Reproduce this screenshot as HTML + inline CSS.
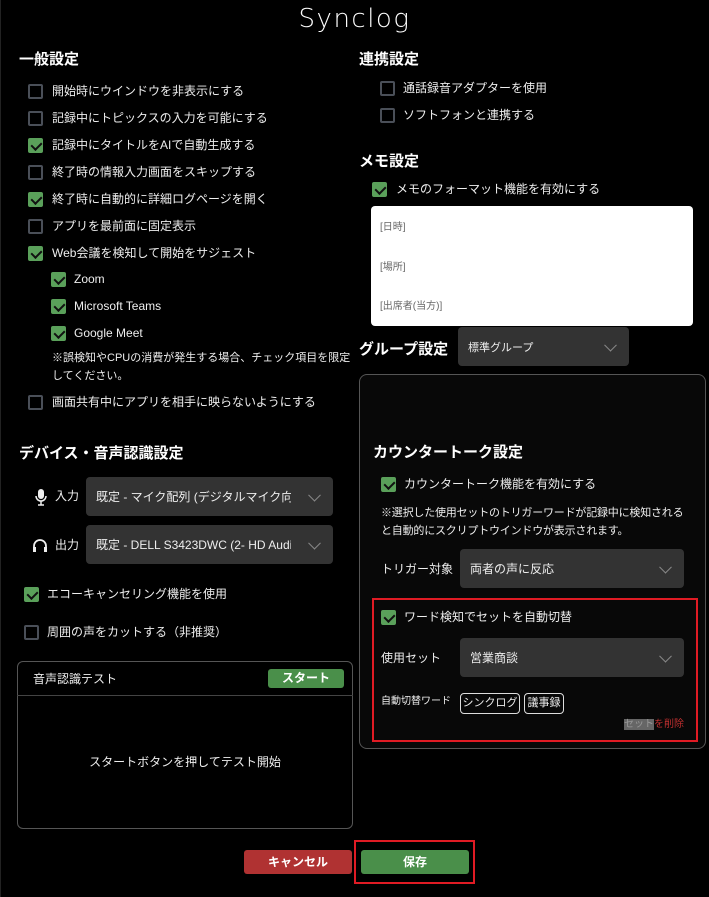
<!DOCTYPE html>
<html><head><meta charset="utf-8"><style>
*{margin:0;padding:0;box-sizing:border-box}
body{width:709px;height:897px;background:#000;color:#eee;font-family:"Liberation Sans","Noto Sans CJK JP",sans-serif;position:relative;overflow:hidden;font-size:12px}
.a{position:absolute;white-space:nowrap}
.h{font-weight:bold;font-size:15px;color:#fff}
.cb{position:absolute;width:15px;height:15px;border:2px solid #4a4f58;border-radius:2px}
.cb.on{background:#5aa05a;border-color:#5aa05a}
.cb.on::after{content:"";position:absolute;left:3px;top:0px;width:5px;height:8px;border:solid #111;border-width:0 2px 2px 0;transform:rotate(45deg)}
.t{position:absolute;font-size:12px;line-height:14px;color:#eee;white-space:nowrap}
.sel{position:absolute;background:#333;border-radius:4px;font-size:12px;color:#eee;padding-left:10px;display:flex;align-items:center;white-space:nowrap}
.sel span{overflow:hidden;display:block}
.sel::after{content:"";position:absolute;right:14px;top:50%;width:8px;height:8px;border:solid #888;border-width:0 1.5px 1.5px 0;transform:translateY(-70%) rotate(45deg)}
</style></head><body>
<div style="position:absolute;left:0;top:0;width:1px;height:897px;background:#222"></div>
<div class="a" style="left:0;width:709px;text-align:center;top:4px;font-size:26px;color:#fff;letter-spacing:1.5px;font-family:'DejaVu Sans',sans-serif;font-weight:300">Synclog</div>

<div class="a h" style="left:19px;top:48px">一般設定</div>
<div class="cb" style="left:28px;top:84px"></div><div class="t" style="left:52px;top:84px">開始時にウインドウを非表示にする</div>
<div class="cb" style="left:28px;top:111px"></div><div class="t" style="left:52px;top:111px">記録中にトピックスの入力を可能にする</div>
<div class="cb on" style="left:28px;top:138px"></div><div class="t" style="left:52px;top:138px">記録中にタイトルをAIで自動生成する</div>
<div class="cb" style="left:28px;top:165px"></div><div class="t" style="left:52px;top:165px">終了時の情報入力画面をスキップする</div>
<div class="cb on" style="left:28px;top:192px"></div><div class="t" style="left:52px;top:192px">終了時に自動的に詳細ログページを開く</div>
<div class="cb" style="left:28px;top:219px"></div><div class="t" style="left:52px;top:219px">アプリを最前面に固定表示</div>
<div class="cb on" style="left:28px;top:246px"></div><div class="t" style="left:52px;top:246px">Web会議を検知して開始をサジェスト</div>
<div class="cb on" style="left:51px;top:272px"></div><div class="t" style="left:74px;top:272px">Zoom</div>
<div class="cb on" style="left:51px;top:299px"></div><div class="t" style="left:74px;top:299px">Microsoft Teams</div>
<div class="cb on" style="left:51px;top:326px"></div><div class="t" style="left:74px;top:326px">Google Meet</div>
<div class="t" style="left:52px;top:349px;font-size:11px;line-height:18px;white-space:normal;width:300px">※誤検知やCPUの消費が発生する場合、チェック項目を限定してください。</div>
<div class="cb" style="left:28px;top:395px"></div><div class="t" style="left:52px;top:395px">画面共有中にアプリを相手に映らないようにする</div>

<div class="a h" style="left:19px;top:442px">デバイス・音声認識設定</div>
<svg class="a" style="left:34px;top:488px" width="14" height="18" viewBox="0 0 14 18"><rect x="4" y="1" width="6" height="10" rx="3" fill="#eee"/><path d="M2 8a5 5 0 0 0 10 0M7 13v4M4 17h6" stroke="#eee" stroke-width="1.5" fill="none"/></svg>
<div class="t" style="left:55px;top:489px">入力</div>
<div class="sel" style="left:86px;top:477px;width:247px;height:39px;padding-right:42px"><span>既定 - マイク配列 (デジタルマイク向けイ</span></div>
<svg class="a" style="left:32px;top:537px" width="16" height="16" viewBox="0 0 16 16"><path d="M2 14V9a6 6 0 0 1 12 0v5" stroke="#eee" stroke-width="1.8" fill="none"/><rect x="1" y="10" width="3" height="5" fill="#eee"/><rect x="12" y="10" width="3" height="5" fill="#eee"/></svg>
<div class="t" style="left:55px;top:538px">出力</div>
<div class="sel" style="left:86px;top:525px;width:247px;height:39px;padding-right:42px"><span>既定 - DELL S3423DWC (2- HD Audio Driv</span></div>
<div class="cb on" style="left:24px;top:587px"></div><div class="t" style="left:47px;top:587px">エコーキャンセリング機能を使用</div>
<div class="cb" style="left:24px;top:625px"></div><div class="t" style="left:47px;top:625px">周囲の声をカットする（非推奨）</div>

<div class="a" style="left:17px;top:661px;width:336px;height:168px;border:1px solid #555;border-radius:6px"></div>
<div class="a" style="left:17px;top:695px;width:336px;height:1px;background:#444"></div>
<div class="t" style="left:33px;top:672px">音声認識テスト</div>
<div class="a" style="left:268px;top:669px;width:76px;height:19px;background:#4a8f4a;border-radius:3px;color:#fff;font-weight:bold;font-size:12px;text-align:center;line-height:19px">スタート</div>
<div class="t" style="left:0;width:370px;text-align:center;top:755px">スタートボタンを押してテスト開始</div>

<div class="a h" style="left:359px;top:48px">連携設定</div>
<div class="cb" style="left:380px;top:81px"></div><div class="t" style="left:403px;top:81px">通話録音アダプターを使用</div>
<div class="cb" style="left:380px;top:108px"></div><div class="t" style="left:403px;top:108px">ソフトフォンと連携する</div>
<div class="a h" style="left:359px;top:150px">メモ設定</div>
<div class="cb on" style="left:372px;top:182px"></div><div class="t" style="left:396px;top:182px">メモのフォーマット機能を有効にする</div>
<div class="a" style="left:371px;top:206px;width:322px;height:120px;background:#fff;border-radius:4px;color:#666;font-size:10px">
<div class="a" style="left:9px;top:12px">[日時]</div><div class="a" style="left:9px;top:52px">[場所]</div><div class="a" style="left:9px;top:91px">[出席者(当方)]</div></div>

<div class="a h" style="left:359px;top:338px">グループ設定</div>
<div class="sel" style="left:458px;top:327px;width:171px;height:39px;font-size:11px">標準グループ</div>

<div class="a" style="left:359px;top:374px;width:347px;height:375px;border:1px solid #555;border-radius:8px;background:#080808"></div>
<div class="a h" style="left:373px;top:441px">カウンタートーク設定</div>
<div class="cb on" style="left:381px;top:477px"></div><div class="t" style="left:404px;top:477px">カウンタートーク機能を有効にする</div>
<div class="t" style="left:381px;top:504px;font-size:11px;line-height:18px;white-space:normal;width:312px;letter-spacing:-0.2px">※選択した使用セットのトリガーワードが記録中に検知されると自動的にスクリプトウインドウが表示されます。</div>
<div class="t" style="left:381px;top:562px">トリガー対象</div>
<div class="sel" style="left:460px;top:549px;width:224px;height:39px">両者の声に反応</div>
<div class="a" style="left:372px;top:598px;width:326px;height:144px;border:2px solid #e01b24"></div>
<div class="cb on" style="left:381px;top:610px"></div><div class="t" style="left:404px;top:610px">ワード検知でセットを自動切替</div>
<div class="t" style="left:381px;top:651px">使用セット</div>
<div class="sel" style="left:460px;top:638px;width:224px;height:39px">営業商談</div>
<div class="t" style="left:381px;top:695px;font-size:10px">自動切替ワード</div>
<div class="a" style="left:460px;top:693px;width:60px;height:21px;border:1px solid #ddd;border-radius:4px;font-size:11px;text-align:center;line-height:19px">シンクログ</div>
<div class="a" style="left:524px;top:693px;width:40px;height:21px;border:1px solid #ddd;border-radius:4px;font-size:11px;text-align:center;line-height:19px">議事録</div>
<div class="a" style="left:624px;top:718px;font-size:10px;line-height:14px"><span style="background:#666;color:#999">セット</span><span style="color:#c03030">を削除</span></div>

<div class="a" style="left:244px;top:850px;width:108px;height:24px;background:#b03232;border-radius:3px;color:#fff;font-weight:bold;text-align:center;line-height:24px">キャンセル</div>
<div class="a" style="left:361px;top:850px;width:108px;height:24px;background:#4a8f4a;border-radius:3px;color:#fff;font-weight:bold;text-align:center;line-height:24px">保存</div>
<div class="a" style="left:354px;top:840px;width:121px;height:44px;border:2px solid #e01b24"></div>
</body></html>
